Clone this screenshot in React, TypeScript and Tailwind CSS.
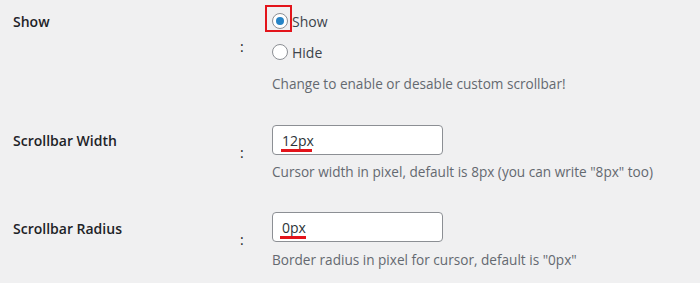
import React from 'react';

const font = { fontFamily: '"Open Sans", "Noto Sans", sans-serif' };

function Radio({ checked }: { checked?: boolean }): JSX.Element {
  return (
    <span className="flex items-center justify-center w-4 h-4 rounded-full border border-[#8c8f94] bg-white">
      {checked && <span className="w-2 h-2 rounded-full bg-[#2684c6]" />}
    </span>
  );
}

function TextInput({ value, lineWidth, lineLeft }: { value: string; lineWidth: string; lineLeft: string }): JSX.Element {
  return (
    <div className="relative w-[171px] h-[30px]">
      <div className="w-full h-full flex items-center px-[9px] bg-white border border-[#8c8f94] rounded-[4px] text-[14px] text-[#2c3338]">
        {value}
      </div>
      {/* red underline annotation */}
      <div className={`absolute top-[24px] h-[3px] bg-[#e3141b] ${lineLeft} ${lineWidth}`} />
    </div>
  );
}

export default function App(): JSX.Element {
  return (
    <div className="w-[700px] h-[283px] bg-[#f0f0f1] overflow-hidden pt-[11px]" style={font}>
      {/* Show */}
      <div className="flex">
        <div className="w-[236px] pl-[13px] pt-[1px] text-[14px] leading-[20px] font-semibold text-[#1d2327]">Show</div>
        <div className="w-[36px] pl-[4px] mt-[26px] text-[14px] leading-[20px] text-[#1d2327]">:</div>
        <div className="flex flex-col">
          <label className="relative flex items-center h-[20px] gap-[4px] text-[14px] text-[#3c434a]">
            <span className="absolute -left-[7px] -top-[6px] w-[27px] h-[27px] border-2 border-[#e3141b]" />
            <Radio checked />
            Show
          </label>
          <label className="flex items-center h-[20px] mt-[11px] gap-[4px] text-[14px] text-[#3c434a]">
            <Radio />
            Hide
          </label>
          <p className="mt-[12px] text-[13.6px] leading-[20px] text-[#646970]">Change to enable or desable custom scrollbar!</p>
        </div>
      </div>

      {/* Scrollbar Width */}
      <div className="flex mt-[31px]">
        <div className="w-[236px] pl-[13px] pt-[6px] text-[14px] leading-[20px] font-semibold text-[#1d2327]">Scrollbar Width</div>
        <div className="w-[36px] pl-[4px] mt-[18px] text-[14px] leading-[20px] text-[#1d2327]">:</div>
        <div className="flex flex-col">
          <TextInput value="12px" lineLeft="left-[9px]" lineWidth="w-[31px]" />
          <p className="mt-[7px] text-[13.6px] leading-[20px] text-[#646970]">Cursor width in pixel, default is 8px (you can write "8px" too)</p>
        </div>
      </div>

      {/* Scrollbar Radius */}
      <div className="flex mt-[30px]">
        <div className="w-[236px] pl-[13px] pt-[7px] text-[14px] leading-[20px] font-semibold text-[#1d2327]">Scrollbar Radius</div>
        <div className="w-[36px] pl-[4px] mt-[18px] text-[14px] leading-[20px] text-[#1d2327]">:</div>
        <div className="flex flex-col">
          <TextInput value="0px" lineLeft="left-[8px]" lineWidth="w-[26px]" />
          <p className="mt-[8px] text-[13.6px] leading-[20px] text-[#646970]">Border radius in pixel for cursor, default is "0px"</p>
        </div>
      </div>
    </div>
  );
}
